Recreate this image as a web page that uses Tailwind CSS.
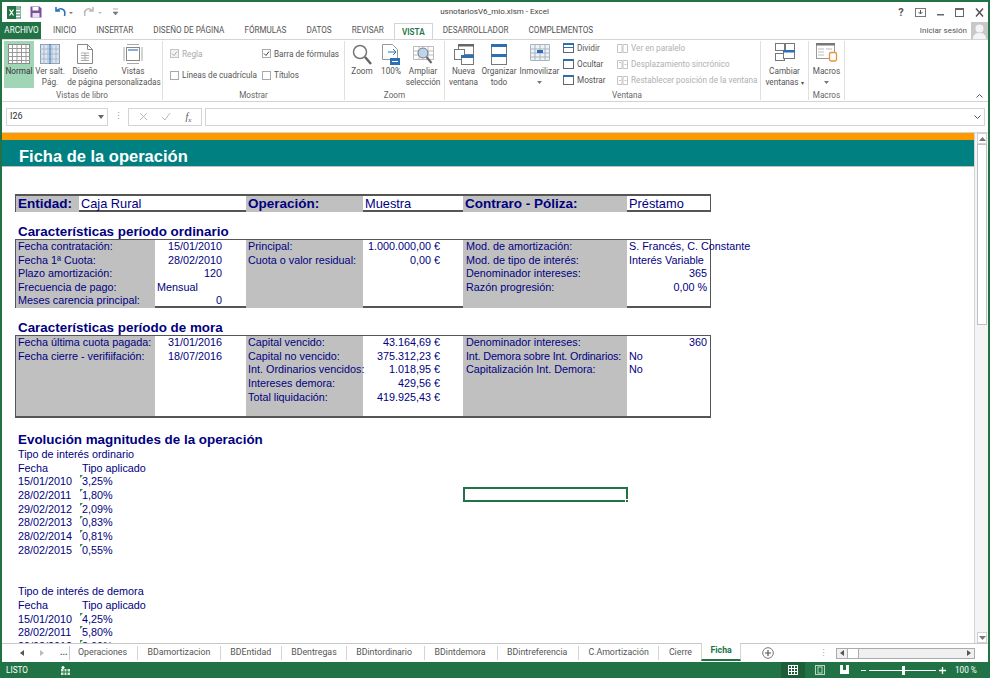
<!DOCTYPE html>
<html lang="es">
<head>
    <meta charset="UTF-8">
    <title>usnotariosV6_mio.xlsm - Excel</title>
    <script src="https://cdn.jsdelivr.net/npm/@tailwindcss/browser@4"></script>
</head>
<body class="w-[990px] h-[678px] overflow-hidden bg-white font-['Roboto',sans-serif] text-[8.200px] text-[#444]">
<div class="flex flex-col h-[678px] border-x-2 border-t-2 border-[#217346] overflow-hidden">

    <!-- Title bar -->
    <div class="flex items-center h-[20px] shrink-0">
        <div class="flex items-center gap-[9px] pl-[5px] w-[400px]">
            <svg width="14" height="13" viewBox="0 0 14 13"><rect x="5" y="1" width="9" height="11" fill="#fff" stroke="#217346"/><path d="M9 3h4M9 6h4M9 9h4" stroke="#217346"/><rect x="0" y="0" width="9" height="13" fill="#217346"/><path d="M2.500 3.500l4 6M6.500 3.500l-4 6" stroke="#fff" stroke-width="1.300"/></svg>
            <svg width="12" height="12" viewBox="0 0 12 12"><path d="M.5.5h9l2 2v9H.5z" fill="#7a4f9c"/><rect x="2.500" y="1" width="6" height="3.500" fill="#fff"/><rect x="2.500" y="7" width="7" height="4.500" fill="#e8dff0"/></svg>
            <svg class="ml-[3px]" width="20" height="12" viewBox="0 0 20 12"><path d="M2 1v4h4M2.500 5C4 3 6 2.500 8 3c2.500.7 3.500 3 2.500 7" fill="none" stroke="#2b6fb5" stroke-width="1.600"/><path d="M15 6h4l-2 2z" fill="#777"/></svg>
            <svg width="20" height="12" viewBox="0 0 20 12"><path d="M10 1v4H6M9.500 5C8 3 6 2.500 4.500 3 2 3.700 1 6 2 10" fill="none" stroke="#bbb" stroke-width="1.600"/><path d="M15 6h4l-2 2z" fill="#bbb"/></svg>
            <svg width="7" height="8" viewBox="0 0 7 8"><path d="M1 1h5M1 4h5l-2.500 3z" fill="#777" stroke="#777" stroke-width=".6"/></svg>
        </div>
        <div class="w-[195px] text-center ml-[-5px] text-[8px] text-[#444]">usnotariosV6_mio.xlsm - Excel</div>
        <div class="ml-auto flex items-center gap-[9px] pr-[3px] text-[#555]">
            <span class="w-[10px] text-center font-bold text-[11px] leading-none">?</span>
            <svg width="11" height="9" viewBox="0 0 11 9"><rect x=".5" y=".5" width="10" height="8" fill="none" stroke="#777"/><path d="M5.500 2v4M3.500 4l2 2 2-2" fill="none" stroke="#555"/></svg>
            <svg class="ml-[1px]" width="10" height="9" viewBox="0 0 10 9"><rect x="1" y="6" width="7" height="1.500" fill="#666"/></svg>
            <svg width="10" height="9" viewBox="0 0 10 9"><rect x=".5" y=".5" width="8" height="8" fill="none" stroke="#666"/><rect x="0" y="0" width="9" height="2" fill="#666"/></svg>
            <svg class="ml-[1px]" width="10" height="9" viewBox="0 0 10 9"><path d="M1 .5l7 8M8 .5l-7 8" stroke="#555" stroke-width="1.500"/></svg>
        </div>
    </div>

    <!-- Ribbon tabs -->
    <div class="flex items-stretch h-[17px] shrink-0 text-[8.150px] text-[#555]">
        <div class="flex items-center justify-center w-[39px] bg-[#217346] text-white">ARCHIVO</div>
        <div class="flex items-center px-[10px] ml-[2px]">INICIO</div>
        <div class="flex items-center px-[10px]">INSERTAR</div>
        <div class="flex items-center px-[10px]">DISEÑO DE PÁGINA</div>
        <div class="flex items-center px-[10px]">FÓRMULAS</div>
        <div class="flex items-center px-[10px]">DATOS</div>
        <div class="flex items-center px-[10px]">REVISAR</div>
        <div class="flex items-center justify-center w-[39px] border border-b-0 border-[#d4d4d4] bg-white text-[#217346] font-semibold relative top-[1px]">VISTA</div>
        <div class="flex items-center px-[10px]">DESARROLLADOR</div>
        <div class="flex items-center px-[10px]">COMPLEMENTOS</div>
        <div class="ml-auto flex items-center gap-[4px] text-[8px] text-[#555]">
            Iniciar sesión
            <svg width="17" height="17" viewBox="0 0 17 17"><rect width="17" height="17" fill="#c8c8c8"/><circle cx="8.500" cy="6.500" r="4" fill="#f4f4f4"/><path d="M2 17c0-5 3-6 6.500-6s6.500 1 6.500 6z" fill="#f4f4f4"/></svg>
        </div>
    </div>

    <!-- Ribbon -->
    <div class="flex h-[63px] shrink-0 border-y border-[#d4d4d4] text-[#555] relative whitespace-nowrap">
        <!-- Vistas de libro -->
        <div class="flex flex-col w-[161px] border-r border-[#e0e0e0] my-[1px]">
            <div class="flex flex-1 pl-[2px] text-center leading-[11px]">
                <div class="flex flex-col items-center w-[30px] h-[47px] bg-[#a0d6b6] text-[#333] pt-[3px]">
                    <svg width="22" height="20" viewBox="0 0 22 20"><rect x=".5" y=".5" width="21" height="19" fill="#fff" stroke="#888"/><path d="M0 4.500h22M0 8.500h22M0 12.500h22M0 16.500h22M4.500 0v20M9 0v20M13.500 0v20M18 0v20" stroke="#999"/></svg>
                    <span class="mt-[2px]">Normal</span>
                </div>
                <div class="flex flex-col items-center w-[32px] pt-[3px]">
                    <svg width="20" height="20" viewBox="0 0 20 20"><rect x=".5" y=".5" width="19" height="19" fill="#dbe6f2" stroke="#8a9fb5"/><path d="M0 5h20M0 10h20M0 15h20M4 0v20M8 0v20M12 0v20M16 0v20" stroke="#a9b9c9"/><path d="M10 0v20" stroke="#2b6fb5"/></svg>
                    <span class="mt-[2px]">Ver salt.<br>Pág.</span>
                </div>
                <div class="flex flex-col items-center w-[38px] pt-[3px]">
                    <svg width="16" height="20" viewBox="0 0 16 20"><path d="M.5.500h10l5 5v14H.5z" fill="#fff" stroke="#888"/><path d="M10.500.500v5h5" fill="none" stroke="#888"/><path d="M4 9h8M4 11.500h8M4 14h8M4 16.500h8M8 9v8" stroke="#aaa"/></svg>
                    <span class="mt-[2px]">Diseño<br>de página</span>
                </div>
                <div class="flex flex-col items-center w-[58px] pt-[3px]">
                    <svg width="20" height="20" viewBox="0 0 20 20"><path d="M1 3v14M19 3v14M4 .5h12M4 19.500h12" stroke="#aaa"/><rect x="3.500" y="3.500" width="13" height="13" fill="#fff" stroke="#888"/><rect x="5" y="5" width="10" height="2" fill="#8ab0d8"/></svg>
                    <span class="mt-[2px]">Vistas<br>personalizadas</span>
                </div>
            </div>
            <div class="text-center h-[12px] leading-[14px] text-[#666]">Vistas de libro</div>
        </div>
        <!-- Mostrar -->
        <div class="flex flex-col w-[182px] border-r border-[#e0e0e0] my-[1px]">
            <div class="grid grid-cols-[92px_1fr] grid-rows-2 flex-1 pl-[7px] py-[2px] items-center">
                <div class="flex items-center gap-[3px] text-[#aaa]">
                    <svg width="9" height="9" viewBox="0 0 9 9"><rect x=".5" y=".5" width="8" height="8" fill="#f2f2f2" stroke="#c4c4c4"/><path d="M2 4.500l2 2 3-4" fill="none" stroke="#aaa"/></svg>Regla
                </div>
                <div class="flex items-center gap-[3px]">
                    <svg width="9" height="9" viewBox="0 0 9 9"><rect x=".5" y=".5" width="8" height="8" fill="#fff" stroke="#aaa"/><path d="M2 4.500l2 2 3-4" fill="none" stroke="#444"/></svg>Barra de fórmulas
                </div>
                <div class="flex items-center gap-[3px]">
                    <svg width="9" height="9" viewBox="0 0 9 9"><rect x=".5" y=".5" width="8" height="8" fill="#fff" stroke="#aaa"/></svg>Líneas de cuadrícula
                </div>
                <div class="flex items-center gap-[3px]">
                    <svg width="9" height="9" viewBox="0 0 9 9"><rect x=".5" y=".5" width="8" height="8" fill="#fff" stroke="#aaa"/></svg>Títulos
                </div>
            </div>
            <div class="text-center h-[12px] leading-[14px] text-[#666]">Mostrar</div>
        </div>
        <!-- Zoom -->
        <div class="flex flex-col w-[100px] border-r border-[#e0e0e0] my-[1px]">
            <div class="flex flex-1 pl-[3px] text-center leading-[11px]">
                <div class="flex flex-col items-center w-[28px] pt-[3px]">
                    <svg width="20" height="21" viewBox="0 0 20 21"><circle cx="8" cy="8" r="6.500" fill="#fff" stroke="#777" stroke-width="1.500"/><path d="M13 13l6 7" stroke="#666" stroke-width="2.500"/></svg>
                    <span class="mt-[1px]">Zoom</span>
                </div>
                <div class="flex flex-col items-center w-[30px] pt-[3px]">
                    <svg width="18" height="21" viewBox="0 0 18 21"><path d="M.5.500h10l5 5v10h-15z" fill="#fff" stroke="#999"/><path d="M6 8h8M11 5l3 3-3 3" fill="none" stroke="#2b6fb5"/><rect x="8" y="14" width="10" height="7" fill="#2b6fb5"/><path d="M10 17.500h6" stroke="#fff"/></svg>
                    <span class="mt-[1px]">100%</span>
                </div>
                <div class="flex flex-col items-center w-[34px] pt-[3px]">
                    <svg width="21" height="21" viewBox="0 0 21 21"><path d="M.5 2.500h20v13H.5zM0 7h21M0 11h21M6 2v13M15 2v13" fill="#fff" stroke="#bbb"/><circle cx="10" cy="9" r="5" fill="#bcd6ee" stroke="#777"/><path d="M13.500 13l5 6" stroke="#666" stroke-width="2"/></svg>
                    <span class="mt-[1px]">Ampliar<br>selección</span>
                </div>
            </div>
            <div class="text-center h-[12px] leading-[14px] text-[#666]">Zoom</div>
        </div>
        <!-- Ventana -->
        <div class="flex flex-col w-[316px] border-r border-[#e0e0e0] my-[1px]">
            <div class="flex flex-1 text-center leading-[11px]">
                <div class="flex flex-col items-center w-[35px] ml-[1px] pt-[3px]">
                    <svg width="20" height="21" viewBox="0 0 20 21"><rect x="4.500" y=".5" width="15" height="10" fill="#fff" stroke="#777"/><rect x="4" y="0" width="16" height="2.500" fill="#666"/><rect x=".5" y="5.500" width="10" height="10" fill="#fff" stroke="#777"/><rect x="7.500" y="11.500" width="12" height="9" fill="#fff" stroke="#777"/><rect x="7" y="11" width="13" height="3" fill="#2b6fb5"/></svg>
                    <span class="mt-[1px]">Nueva<br>ventana</span>
                </div>
                <div class="flex flex-col items-center w-[36px] pt-[3px]">
                    <svg width="16" height="21" viewBox="0 0 16 21"><rect x=".5" y=".5" width="15" height="20" fill="#fff" stroke="#777"/><rect x="0" y="0" width="16" height="3" fill="#2b6fb5"/><rect x="0" y="10" width="16" height="3" fill="#2b6fb5"/></svg>
                    <span class="mt-[1px]">Organizar<br>todo</span>
                </div>
                <div class="flex flex-col items-center w-[45px] pt-[3px]">
                    <svg width="20" height="21" viewBox="0 0 20 21"><path d="M.5.500h19v16H.5zM0 5h20M0 9h20M0 13h20M5 0v17M10 0v17M15 0v17" fill="#eef3f8" stroke="#aab4be"/><rect x="7" y="6" width="6" height="3" fill="#2b6fb5"/></svg>
                    <span class="mt-[1px]">Inmovilizar</span>
                    <svg class="mt-[4px]" width="5" height="3" viewBox="0 0 5 3"><path d="M0 0h5L2.500 3z" fill="#777"/></svg>
                </div>
                <div class="flex flex-col gap-[4px] w-[54px] pl-[1px] pt-[1px] text-left">
                    <div class="flex items-center gap-[3px] h-[12px]"><svg width="11" height="10" viewBox="0 0 11 10"><rect x=".5" y=".5" width="10" height="9" fill="#fff" stroke="#666"/><rect x="0" y="0" width="11" height="2" fill="#2b6fb5"/><rect x="0" y="4" width="11" height="1" fill="#2b6fb5"/></svg>Dividir</div>
                    <div class="flex items-center gap-[3px] h-[12px]"><svg width="11" height="10" viewBox="0 0 11 10"><rect x=".5" y=".5" width="10" height="9" fill="#fff" stroke="#666"/><rect x="0" y="0" width="11" height="2" fill="#2b6fb5"/></svg>Ocultar</div>
                    <div class="flex items-center gap-[3px] h-[12px]"><svg width="11" height="10" viewBox="0 0 11 10"><rect x=".5" y=".5" width="10" height="9" fill="#fff" stroke="#666"/><rect x="0" y="0" width="11" height="2" fill="#2b6fb5"/></svg>Mostrar</div>
                </div>
                <div class="flex flex-col gap-[4px] pl-[1px] pt-[1px] text-left text-[#b0b0b0]">
                    <div class="flex items-center gap-[3px] h-[12px]"><svg width="11" height="10" viewBox="0 0 11 10"><path d="M.5 1.500h4.500v8H.5zM6 1.500h4.500v8H6z" fill="none" stroke="#c4c4c4"/></svg>Ver en paralelo</div>
                    <div class="flex items-center gap-[3px] h-[12px]"><svg width="11" height="10" viewBox="0 0 11 10"><path d="M.5 1.500h4.500v8H.5zM6 1.500h4.500v8H6zM2 3.500h2M7.500 5.500h2" fill="none" stroke="#c4c4c4"/></svg>Desplazamiento sincrónico</div>
                    <div class="flex items-center gap-[3px] h-[12px]"><svg width="11" height="10" viewBox="0 0 11 10"><path d="M.5 1.500h4.500v8H.5zM6 1.500h4.500v8H6zM2 5.500h2M7.500 5.500h2" fill="none" stroke="#c4c4c4"/></svg>Restablecer posición de la ventana</div>
                </div>
            </div>
            <div class="h-[12px] leading-[14px] text-[#666] pl-[167px]">Ventana</div>
        </div>
        <!-- Cambiar ventanas -->
        <div class="flex flex-col items-center w-[48px] border-r border-[#e0e0e0] my-[1px] pt-[2px] text-center leading-[11px]">
            <svg width="20" height="19" viewBox="0 0 20 19"><rect x=".5" y=".5" width="9" height="7" fill="#fff" stroke="#777"/><rect x="10.500" y=".5" width="9" height="7" fill="#fff" stroke="#777"/><rect x=".5" y="10.500" width="9" height="7" fill="#fff" stroke="#777"/><rect x="8.500" y="7.500" width="11" height="8" fill="#fff" stroke="#777"/><rect x="8" y="7" width="12" height="2.500" fill="#2b6fb5"/></svg>
            <span class="mt-[4px]">Cambiar<br>ventanas <span class="text-[6px]">▾</span></span>
        </div>
        <!-- Macros -->
        <div class="flex flex-col w-[36px] border-r border-[#e0e0e0] my-[1px] text-center leading-[11px]">
            <div class="flex flex-col flex-1 items-center pt-[2px]">
                <svg width="22" height="19" viewBox="0 0 22 19"><rect x=".5" y=".5" width="18" height="15" fill="#fff" stroke="#999"/><rect x="0" y="0" width="19" height="2.500" fill="#777"/><path d="M2 6h6M2 9h6M2 12h6M10 6h6" stroke="#bbb"/><rect x="13.500" y="9.500" width="7" height="8.500" rx="1.500" fill="#fff" stroke="#e8913a" stroke-width="1.300"/></svg>
                <span class="mt-[4px]">Macros</span>
                <svg class="mt-[4px]" width="5" height="3" viewBox="0 0 5 3"><path d="M0 0h5L2.500 3z" fill="#777"/></svg>
            </div>
            <div class="h-[12px] leading-[14px] text-[#666]">Macros</div>
        </div>
        <svg class="absolute right-[5px] bottom-[3px]" width="7" height="4" viewBox="0 0 7 4"><path d="M.5 3.500l3-3 3 3" fill="none" stroke="#555"/></svg>
    </div>

    <!-- Formula bar -->
    <div class="flex items-center h-[31px] shrink-0 pt-[6px] pb-[7px] pl-[4px] pr-[3px] border-b border-[#d4d4d4]">
        <div class="flex items-center justify-between w-[102px] h-[18px] border border-[#d4d4d4] px-[3px] text-[9px] text-[#333]">I26<svg width="6" height="4" viewBox="0 0 6 4"><path d="M0 0h6L3 4z" fill="#666"/></svg></div>
        <div class="w-[20px] text-center text-[#999] text-[9px] leading-none">⋮</div>
        <div class="flex items-center justify-around w-[74px] h-[18px] border border-[#d4d4d4] px-[3px]">
            <svg width="9" height="9" viewBox="0 0 9 9"><path d="M1 1l7 7M8 1L1 8" stroke="#bbb"/></svg>
            <svg width="10" height="9" viewBox="0 0 10 9"><path d="M1 5l3 3 5-7" fill="none" stroke="#bbb"/></svg>
            <span class="font-['Liberation_Serif',serif] italic text-[10px] text-[#555] ml-[2px]">f<sub class="text-[7px]">x</sub></span>
        </div>
        <div class="flex flex-1 items-center justify-end h-[18px] ml-[3px] border border-[#d4d4d4] pr-[3px]"><svg width="7" height="4" viewBox="0 0 7 4"><path d="M.5.500l3 3 3-3" fill="none" stroke="#555"/></svg></div>
    </div>

    <!-- Sheet area -->
    <div class="flex flex-1 min-h-0">
        <div class="relative flex-1 min-w-0 overflow-hidden font-['Liberation_Sans',sans-serif] text-[#000080] text-[10.800px] leading-[13.670px]">
            <div class="h-[7px] bg-[#ff9900]"></div>
            <div class="flex items-center h-[27px] bg-[#008080] pl-[17px] pt-[7px] text-white font-bold text-[16.500px] border-b border-[#c0c0c0]">Ficha de la operación</div>

            <!-- Entidad -->
            <div class="grid grid-cols-[63px_167px_117px_100px_164px_83px] w-[696px] h-[18px] ml-[13px] mt-[27px] border-y-2 border-x border-[#555] text-[12.800px] leading-[16px] whitespace-nowrap">
                <div class="bg-[#c0c0c0] pl-[2px] font-bold text-[13.500px]">Entidad:</div>
                <div class="pl-[2px]">Caja Rural</div>
                <div class="bg-[#c0c0c0] pl-[2px] font-bold text-[13.500px]">Operación:</div>
                <div class="pl-[2px]">Muestra</div>
                <div class="bg-[#c0c0c0] pl-[2px] font-bold text-[13.500px]">Contraro - Póliza:</div>
                <div class="pl-[2px]">Préstamo</div>
            </div>

            <!-- Periodo ordinario -->
            <div class="ml-[16px] mt-[14px] h-[13px] font-bold text-[13.400px] leading-[12px]">Características período ordinario</div>
            <div class="grid grid-cols-[139px_91px_117px_100px_164px_83px] w-[696px] h-[69px] ml-[13px] border-t border-b-2 border-x border-[#555] whitespace-nowrap leading-[13.600px]">
                <div class="bg-[#c0c0c0] pl-[2px]">Fecha contratación:<br>Fecha 1ª Cuota:<br>Plazo amortización:<br>Frecuencia de pago:<br>Meses carencia principal:</div>
                <div class="flex flex-col pr-[24px] text-right">
                    <span>15/01/2010</span><span>28/02/2010</span><span>120</span><span class="text-left pl-[2px]">Mensual</span><span>0</span>
                </div>
                <div class="bg-[#c0c0c0] pl-[2px]">Principal:<br>Cuota o valor residual:</div>
                <div class="pr-[23px] text-right">1.000.000,00 €<br>0,00 €</div>
                <div class="bg-[#c0c0c0] pl-[3px]">Mod. de amortización:<br>Mod. de tipo de interés:<br>Denominador intereses:<br>Razón progresión:</div>
                <div class="flex flex-col pr-[3px]">
                    <span class="pl-[2px]">S. Francés, C. Constante</span><span class="pl-[2px]">Interés Variable</span><span class="text-right">365</span><span class="text-right">0,00 %</span>
                </div>
            </div>

            <!-- Periodo de mora -->
            <div class="ml-[16px] mt-[14px] h-[13px] font-bold text-[13.400px] leading-[12px]">Características período de mora</div>
            <div class="grid grid-cols-[139px_91px_117px_100px_164px_83px] w-[696px] h-[83px] ml-[13px] border-t border-b-2 border-x border-[#555] whitespace-nowrap">
                <div class="bg-[#c0c0c0] pl-[2px]">Fecha última cuota pagada:<br>Fecha cierre - verifiifación:</div>
                <div class="pr-[24px] text-right">31/01/2016<br>18/07/2016</div>
                <div class="bg-[#c0c0c0] pl-[2px]">Capital vencido:<br>Capital no vencido:<br>Int. Ordinarios vencidos:<br>Intereses demora:<br>Total liquidación:</div>
                <div class="pr-[23px] text-right">43.164,69 €<br>375.312,23 €<br>1.018,95 €<br>429,56 €<br>419.925,43 €</div>
                <div class="bg-[#c0c0c0] pl-[3px]">Denominador intereses:<br><span class="tracking-[-0.15px]">Int. Demora sobre Int. Ordinarios:</span><br>Capitalización Int. Demora:</div>
                <div class="flex flex-col pr-[3px]"><span class="text-right">360</span><span class="pl-[2px]">No</span><span class="pl-[2px]">No</span></div>
            </div>

            <!-- Evolucion -->
            <div class="ml-[16px] mt-[14px] h-[16px] font-bold text-[13.400px] leading-[15px]">Evolución magnitudes de la operación</div>
            <div class="ml-[16px]">Tipo de interés ordinario</div>
            <div class="grid grid-cols-[62px_1fr] ml-[16px]">
                <span>Fecha</span><span class="pl-[2px]">Tipo aplicado</span>
                <span>15/01/2010</span><span class="relative pl-[2px]">3,25%<i class="absolute left-0 top-0 border-t-[3px] border-r-[3px] border-t-[#2e9145] border-r-transparent"></i></span>
                <span>28/02/2011</span><span class="relative pl-[2px]">1,80%<i class="absolute left-0 top-0 border-t-[3px] border-r-[3px] border-t-[#2e9145] border-r-transparent"></i></span>
                <span>29/02/2012</span><span class="relative pl-[2px]">2,09%<i class="absolute left-0 top-0 border-t-[3px] border-r-[3px] border-t-[#2e9145] border-r-transparent"></i></span>
                <span>28/02/2013</span><span class="relative pl-[2px]">0,83%<i class="absolute left-0 top-0 border-t-[3px] border-r-[3px] border-t-[#2e9145] border-r-transparent"></i></span>
                <span>28/02/2014</span><span class="relative pl-[2px]">0,81%<i class="absolute left-0 top-0 border-t-[3px] border-r-[3px] border-t-[#2e9145] border-r-transparent"></i></span>
                <span>28/02/2015</span><span class="relative pl-[2px]">0,55%<i class="absolute left-0 top-0 border-t-[3px] border-r-[3px] border-t-[#2e9145] border-r-transparent"></i></span>
            </div>
            <div class="ml-[16px] mt-[28px]">Tipo de interés de demora</div>
            <div class="grid grid-cols-[62px_1fr] ml-[16px]">
                <span>Fecha</span><span class="pl-[2px]">Tipo aplicado</span>
                <span>15/01/2010</span><span class="relative pl-[2px]">4,25%<i class="absolute left-0 top-0 border-t-[3px] border-r-[3px] border-t-[#2e9145] border-r-transparent"></i></span>
                <span>28/02/2011</span><span class="relative pl-[2px]">5,80%<i class="absolute left-0 top-0 border-t-[3px] border-r-[3px] border-t-[#2e9145] border-r-transparent"></i></span>
                <span>29/02/2012</span><span class="relative pl-[2px]">3,09%<i class="absolute left-0 top-0 border-t-[3px] border-r-[3px] border-t-[#2e9145] border-r-transparent"></i></span>
            </div>

            <!-- Selected cell -->
            <div class="absolute left-[461px] top-[354px] w-[165px] h-[15px] border-2 border-[#217346]">
                <div class="absolute right-[-3px] bottom-[-3px] w-[4px] h-[4px] bg-[#217346] border border-white"></div>
            </div>
        </div>

        <!-- Vertical scrollbar -->
        <div class="flex flex-col w-[14px] shrink-0 border-l border-[#d4d4d4] pl-[2px] pr-[1px] bg-[#f4f4f4]">
            <div class="flex items-center justify-center h-[11px] shrink-0 bg-white border border-[#d0d0d0]">
                <svg width="7" height="4" viewBox="0 0 7 4"><path d="M0 4l3.500-4L7 4z" fill="#777"/></svg>
            </div>
            <div class="h-[181px] shrink-0 bg-white border border-[#c0c0c0]"></div>
            <div class="flex items-center justify-center h-[11px] mt-auto shrink-0 bg-white border border-[#d0d0d0]">
                <svg width="7" height="4" viewBox="0 0 7 4"><path d="M0 0l3.500 4L7 0z" fill="#777"/></svg>
            </div>
        </div>
    </div>

    <!-- Sheet tabs -->
    <div class="flex items-stretch h-[19px] shrink-0 border-t border-[#c8c8c8] text-[8.800px] text-[#555] whitespace-nowrap">
        <div class="flex items-center w-[68px] border-r border-[#c8c8c8] my-[2px] pl-[18px] gap-[16px]">
            <svg width="4" height="6" viewBox="0 0 4 6"><path d="M4 0L0 3l4 3z" fill="#555"/></svg>
            <svg width="4" height="6" viewBox="0 0 4 6"><path d="M0 0l4 3-4 3z" fill="#bbb"/></svg>
            <span class="font-bold">...</span>
        </div>
        <div class="flex items-center pl-[8px] pr-[10px] border-r border-[#d4d4d4] my-[2px]">Operaciones</div>
        <div class="flex items-center px-[9.500px] border-r border-[#d4d4d4] my-[2px]">BDamortizacion</div>
        <div class="flex items-center px-[9.500px] border-r border-[#d4d4d4] my-[2px]">BDEntidad</div>
        <div class="flex items-center pl-[9.500px] pr-[9px] border-r border-[#d4d4d4] my-[2px]">BDentregas</div>
        <div class="flex items-center pl-[9.500px] pr-[12px] border-r border-[#d4d4d4] my-[2px]">BDintordinario</div>
        <div class="flex items-center pl-[9.500px] pr-[11px] border-r border-[#d4d4d4] my-[2px]">BDintdemora</div>
        <div class="flex items-center pl-[9.500px] pr-[10.500px] border-r border-[#d4d4d4] my-[2px]">BDintreferencia</div>
        <div class="flex items-center px-[9.500px] border-r border-[#d4d4d4] my-[2px]">C.Amortización</div>
        <div class="flex items-center px-[9.500px]">Cierre</div>
        <div class="flex items-center px-[8px] mb-[1px] bg-white border-x border-[#d4d4d4] border-b-2 border-b-[#217346] font-bold text-[#217346] mt-[-1px]">Ficha</div>
        <div class="flex items-center ml-[21px]">
            <svg width="12" height="12" viewBox="0 0 12 12"><circle cx="6" cy="6" r="5.300" fill="#fff" stroke="#777"/><path d="M3 6h6M6 3v6" stroke="#555" stroke-width="1.200"/></svg>
        </div>
        <div class="ml-auto flex items-center pr-[13px] gap-[8px]">
            <span class="text-[#aaa] leading-none">⋮</span>
            <div class="flex items-center w-[139px] h-[11px] bg-[#f0f0f0] border border-[#ababab]">
                <svg class="mx-[3px]" width="4" height="6" viewBox="0 0 4 6"><path d="M4 0L0 3l4 3z" fill="#555"/></svg>
                <div class="w-[12px] h-full bg-white border-x border-[#ababab]"></div>
                <svg class="ml-auto mr-[3px]" width="4" height="6" viewBox="0 0 4 6"><path d="M0 0l4 3-4 3z" fill="#555"/></svg>
            </div>
        </div>
    </div>

    <!-- Status bar -->
    <div class="flex items-center h-[16px] shrink-0 bg-[#217346] text-white text-[8.200px] pl-[4px] whitespace-nowrap">
        <span class="w-[20px]">LISTO</span>
        <svg class="ml-[35px]" width="9" height="9" viewBox="0 0 9 9"><rect x="0" y="3" width="9" height="6" fill="#d8e8de"/><path d="M3 3v6M6 3v6M0 6h9" stroke="#217346"/><circle cx="2" cy="1.500" r="1.500" fill="#fff"/></svg>
        <div class="ml-auto flex items-center h-full pr-[12px]">
            <div class="flex items-center justify-center w-[24px] h-full mr-[10px] bg-[#1b5e38]">
                <svg width="10" height="10" viewBox="0 0 10 10"><rect x=".5" y=".5" width="9" height="9" fill="none" stroke="#fff"/><path d="M0 3.500h10M0 6.500h10M3.500 0v10M6.500 0v10" stroke="#fff"/></svg>
            </div>
            <svg class="mr-[15px]" width="10" height="10" viewBox="0 0 10 10"><rect x=".5" y=".5" width="9" height="9" fill="none" stroke="#bcd5c6"/><rect x="3" y="2" width="4" height="6" fill="none" stroke="#bcd5c6"/></svg>
            <svg class="mr-[12px]" width="9" height="10" viewBox="0 0 9 10"><path d="M0 0h9v9H0z" fill="#fff"/><rect x="3" y="0" width="3" height="5" fill="#217346"/></svg>
            <span class="w-[5px] h-[1px] bg-white"></span>
            <div class="relative w-[67px] h-[1px] bg-white mx-[3px]"><span class="absolute left-[33px] top-[-4px] w-[3px] h-[9px] bg-white"></span></div>
            <svg width="7" height="7" viewBox="0 0 7 7"><path d="M0 3.500h7M3.500 0v7" stroke="#fff" stroke-width="1.300"/></svg>
            <span class="w-[21px] ml-[9px] text-right">100 %</span>
        </div>
    </div>
</div>
</body>
</html>
